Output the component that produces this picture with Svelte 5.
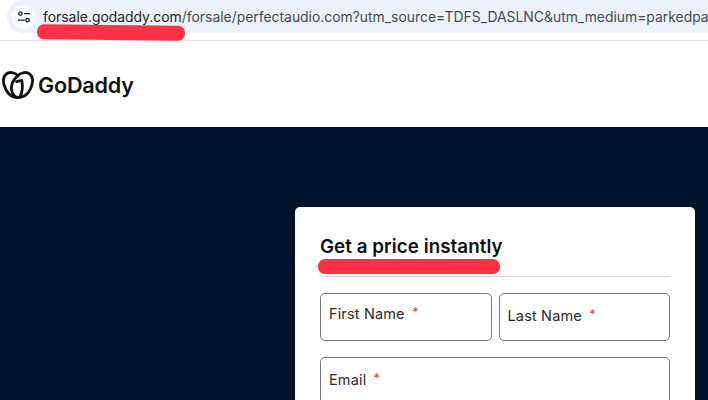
<script>
  const urlHost = 'forsale.godaddy.com';
  const urlPath = '/forsale/perfectaudio.com?utm_source=TDFS_DASLNC&utm_medium=parkedpa';
</script>

<div class="page">
  <div class="chrome">
    <div class="address">
      <span class="tune">
        <svg width="14" height="14" viewBox="0 0 14 14" fill="none" stroke="#26282b" stroke-width="1.3">
          <circle cx="3.4" cy="3.6" r="1.7"/>
          <path d="M7 3.6h6"/>
          <circle cx="10.6" cy="10.2" r="1.7"/>
          <path d="M1 10.2h6.8"/>
        </svg>
      </span>
      <span class="url"><span class="host">{urlHost}</span><span class="path">{urlPath}</span></span>
    </div>
    <span class="mark mark-url"></span>
  </div>

  <header class="brand">
    <svg class="logo" width="32" height="28" viewBox="0 0 32 28" fill="none" stroke="#111" stroke-width="2.8" stroke-linecap="round" stroke-linejoin="round">
      <path d="M16 4.6C12.6 1.2 7.4 0.6 4.4 2.8C0.6 5.6 0.6 12 3.6 18C6 23 10.6 26.6 16 26.6C21.4 26.6 26 23 28.4 18C31.4 12 31.4 5.6 27.6 2.8C24.6 0.6 19.4 1.2 16 4.6Z"/>
      <path d="M16 4.6C11.6 8.4 8.6 13.6 9.6 19C10.2 22.4 12.4 25.4 15 26.4"/>
      <path d="M14.6 10.6L19.8 9.4C20.6 13.6 20.4 21 18 26"/>
    </svg>
    <span class="word">GoDaddy</span>
  </header>

  <main class="hero">
    <section class="card">
      <h2>Get a price instantly</h2>
      <span class="mark mark-title"></span>
      <div class="rule"></div>
      <div class="names">
        <div class="field"><span class="label first">First Name <i>*</i></span></div>
        <div class="field"><span class="label last">Last Name <i>*</i></span></div>
      </div>
      <div class="field email"><span class="label">Email <i>*</i></span></div>
    </section>
  </main>
</div>

<style>
  :global(body) {
    margin: 0;
    background: #fff;
    overflow: hidden;
  }
  .page {
    width: 708px;
    height: 400px;
    overflow: hidden;
    display: flex;
    flex-direction: column;
    font-family: "Inter", "Liberation Sans", sans-serif;
  }
  .chrome {
    position: relative;
    height: 41px;
    flex: none;
    box-sizing: border-box;
    border-bottom: 1px solid #e4e4e2;
    background: #fff;
    padding-left: 7px;
  }
  .address {
    height: 33px;
    background: #edf2fb;
    border-radius: 17px 0 0 17px;
    display: flex;
    align-items: center;
    gap: 7px;
    padding-left: 5px;
    overflow: hidden;
  }
  .tune {
    width: 24px;
    height: 24px;
    flex: none;
    border-radius: 50%;
    background: #fafbfe;
    display: flex;
    align-items: center;
    justify-content: center;
  }
  .url {
    font-size: 13.9px;
    white-space: nowrap;
    color: #474a4f;
  }
  .host {
    color: #1f2023;
  }
  .mark {
    position: absolute;
    display: block;
    background: #fb3345;
    border-radius: 7px;
  }
  .mark-url {
    left: 37px;
    top: 25px;
    width: 148px;
    height: 15px;
    transform: rotate(0.6deg);
  }
  .brand {
    height: 86px;
    flex: none;
    background: #fff;
    display: flex;
    align-items: center;
    gap: 4px;
    padding: 1px 0 0 2px;
    box-sizing: border-box;
  }
  .logo {
    display: block;
  }
  .word {
    font-size: 21.6px;
    font-weight: 600;
    letter-spacing: -0.2px;
    color: #111;
  }
  .hero {
    flex: 1;
    background: #00112c;
    padding: 80px 13px 0 295px;
  }
  .card {
    position: relative;
    background: #fff;
    border-radius: 5px;
    padding: 28px 25px 0;
    height: 300px;
    box-sizing: border-box;
  }
  h2 {
    margin: 0;
    font-size: 18.8px;
    line-height: 24px;
    font-weight: 600;
    letter-spacing: 0.05px;
    color: #111;
  }
  .mark-title {
    left: 23px;
    top: 52px;
    width: 182px;
    height: 15px;
  }
  .rule {
    height: 1px;
    background: #d6d6d6;
    margin-top: 17px;
  }
  .names {
    display: flex;
    gap: 7px;
    margin-top: 16px;
  }
  .names .field {
    flex: 1;
    height: 48px;
  }
  .field {
    border: 1px solid #767676;
    border-radius: 5px;
    box-sizing: border-box;
    padding-left: 8px;
    color: #2b2b2b;
  }
  .email {
    margin-top: 16px;
    height: 60px;
  }
  .label {
    display: block;
    font-size: 14.5px;
    line-height: 20px;
    padding-top: 10px;
    letter-spacing: 0.15px;
  }
  .last {
    padding-top: 12px;
  }
  .email .label {
    padding-top: 12px;
  }
  .label i {
    font-style: normal;
    font-size: 13px;
    line-height: 0;
    color: #c2564c;
    margin-left: 3px;
    vertical-align: 2px;
  }
</style>
